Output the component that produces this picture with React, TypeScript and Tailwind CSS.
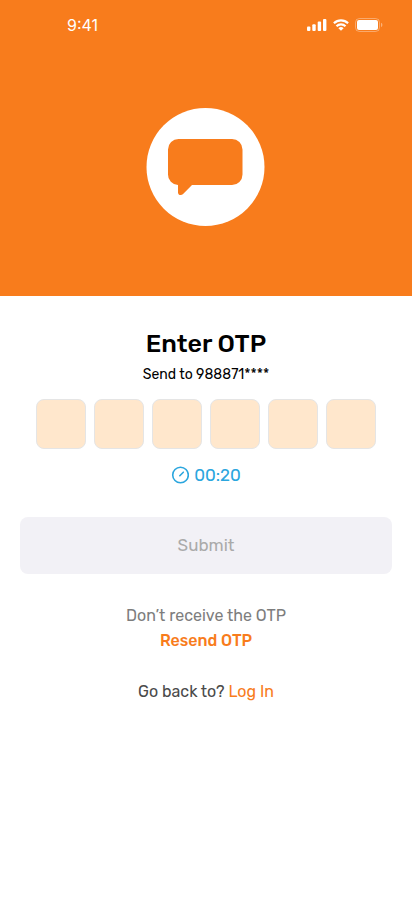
import React, { useRef, useState } from "react";

const OTP_LENGTH = 6;

const StatusBar: React.FC = () => {
  return (
    <div className="flex h-[50px] items-center justify-between pl-[67px] pr-[29px] text-white">
      <span className="font-['Inter',sans-serif] text-[16px] leading-6">9:41</span>
      <div className="flex items-center gap-[6px]">
        <svg width="20" height="12" viewBox="0 0 20 12" fill="currentColor" aria-hidden="true">
          <rect x="0" y="7.5" width="3.4" height="4.5" rx="1" />
          <rect x="5.3" y="5.3" width="3.4" height="6.7" rx="1" />
          <rect x="10.7" y="2.6" width="3.4" height="9.4" rx="1" />
          <rect x="16" y="0" width="3.4" height="12" rx="1" />
        </svg>
        <svg width="16" height="12" viewBox="0 0 16 12" aria-hidden="true">
          <g fill="none" stroke="currentColor" strokeWidth="2.2">
            <path d="M.9 4.2a10.200 10.200 0 0 1 14.200 0" />
            <path d="M3.500 7.200a6.300 6.300 0 0 1 9 0" />
          </g>
          <path d="M8 11.800 5.400 9.300a3.700 3.700 0 0 1 5.200 0z" fill="currentColor" />
        </svg>
        <svg width="28" height="14" viewBox="0 0 28 14" aria-hidden="true">
          <rect x=".5" y=".5" width="24" height="13" rx="4" fill="none" stroke="currentColor" strokeOpacity=".35" />
          <rect x="2" y="2" width="21" height="10" rx="2" fill="currentColor" />
          <path d="M26 4.800v4.400a2.400 2.400 0 0 0 0-4.400z" fill="currentColor" fillOpacity=".4" />
        </svg>
      </div>
    </div>
  );
};

const App: React.FC = () => {
  const [otp, setOtp] = useState<string[]>(Array(OTP_LENGTH).fill(""));
  const inputs = useRef<(HTMLInputElement | null)[]>([]);

  const handleChange = (index: number, value: string) => {
    const digit = value.replace(/\D/g, "").slice(-1);
    setOtp(otp.map((item, i) => (i === index ? digit : item)));
    if (digit && index < OTP_LENGTH - 1) {
      inputs.current[index + 1]?.focus();
    }
  };

  const isComplete = otp.every((digit) => digit !== "");

  return (
    <div className="min-h-screen bg-white font-['Rubik','Roboto',sans-serif]">
      <header className="bg-[#f87c1c] pb-[70px]">
        <StatusBar />
        <div className="flex justify-center pt-[58px]">
          <svg width="120" height="118" viewBox="0 0 120 118" aria-hidden="true">
            <circle cx="59.5" cy="59" r="59" fill="white" />
            <path
              d="M32.500 31H86a10.500 10.500 0 0 1 10.500 10.500V66.500a10.500 10.500 0 0 1-10.500 10.500H46l-8.900 8.900c-1.900 1.900-5.100 1.200-5.100-1.500V77a10.200 10.200 0 0 1-10-10.500v-25A10.500 10.500 0 0 1 32.500 31z"
              fill="#f87c1c"
            />
          </svg>
        </div>
      </header>

      <main className="px-5 pt-8 text-center">
        <h1 className="text-[25px] font-medium leading-8 text-black">Enter OTP</h1>
        <p className="mt-[5px] text-sm leading-5 text-black">Send to 988871****</p>

        <form onSubmit={(e) => e.preventDefault()}>
          <div className="mt-[14px] flex justify-center gap-2">
            {otp.map((digit, index) => (
              <input
                key={index}
                ref={(el) => {
                  inputs.current[index] = el;
                }}
                type="text"
                inputMode="numeric"
                aria-label={`Digit ${index + 1}`}
                className="h-[50px] w-[50px] rounded-lg border border-[#e5e5e5] bg-[#ffe7cc] text-center text-xl text-black outline-none focus:border-[#f87c1c]"
                value={digit}
                onChange={(e) => handleChange(index, e.target.value)}
              />
            ))}
          </div>

          <div className="mt-[14px] flex items-center justify-center gap-[5px] text-[#2ba6de]">
            <svg width="18" height="18" viewBox="0 0 18 18" fill="none" stroke="currentColor" strokeWidth="1.6" aria-hidden="true">
              <circle cx="9.5" cy="9" r="7.8" />
              <path d="M8.800 9.700 12.300 6.200" strokeLinecap="round" />
            </svg>
            <span className="text-[17px] leading-6">00:20</span>
          </div>

          <button
            type="submit"
            disabled={!isComplete}
            className="mt-[30px] h-[57px] w-full rounded-lg bg-[#f2f1f6] text-[17px] text-[#aaaaaa]"
          >
            Submit
          </button>
        </form>

        <p className="mt-[29px] text-base leading-[25px] text-[#7d7d7d]">Don’t receive the OTP</p>
        <button type="button" className="block mx-auto text-base font-medium leading-[25px] text-[#f87c1c]">
          Resend OTP
        </button>
        <p className="mt-[26px] text-base leading-[25px] text-[#4a4a4a]">
          Go back to?{" "}
          <a href="#login" className="text-[#f87c1c]">
            Log In
          </a>
        </p>
      </main>
    </div>
  );
};

export default App;
